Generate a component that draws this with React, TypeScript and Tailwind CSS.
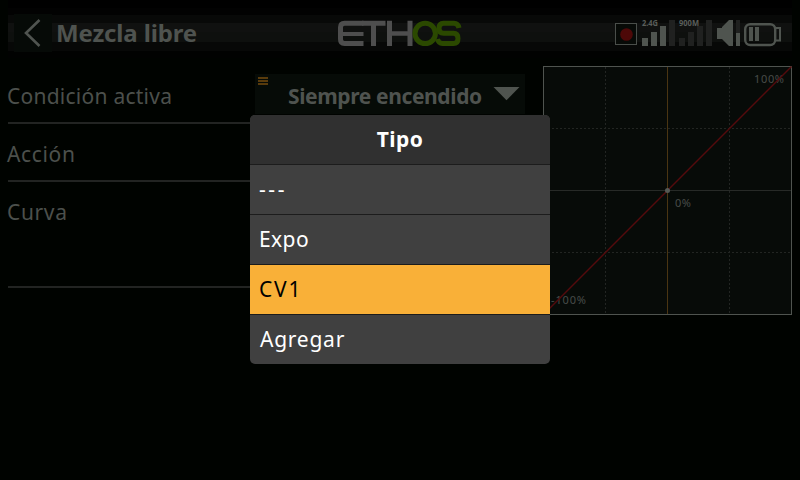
import React from "react";

function StatusIcons() {
  return (
    <svg className="h-[50px] w-[180px]" viewBox="612 8 180 50">
      <rect x="615.5" y="23.5" width="21" height="21" fill="#070a07" stroke="#4a4e4a" />
      <circle cx="626.5" cy="34.5" r="6.3" fill="#4d0808" />
      <g fill="#4f544f">
        <rect x="642" y="38" width="6" height="8" />
        <rect x="651" y="32" width="6" height="14" />
        <rect x="660" y="26" width="6" height="20" />
      </g>
      <g fill="#202120">
        <rect x="669" y="20" width="6" height="26" />
        <rect x="679" y="38" width="6" height="8" />
        <rect x="688" y="32" width="6" height="14" />
        <rect x="697" y="26" width="6" height="20" />
        <rect x="706" y="20" width="6" height="26" />
        <rect x="736" y="20" width="4" height="13" />
      </g>
      <g fill="#5a5e5a" fontFamily="'Noto Sans', sans-serif" fontSize="8" fontWeight="700">
        <text x="642" y="26" textLength="16" lengthAdjust="spacingAndGlyphs">2.4G</text>
        <text x="679" y="26" textLength="20" lengthAdjust="spacingAndGlyphs">900M</text>
      </g>
      <path d="M717 28h5v11h-5zM722 27l7-7h4v26h-4l-7-7z" fill="#4f544f" />
      <rect x="736" y="33" width="4" height="13" fill="#4f544f" />
      <rect x="745.2" y="24.2" width="30" height="20.800" rx="5" fill="none" stroke="#4f544f" strokeWidth="2.4" />
      <path d="M776 28h4v12.500h-4" fill="none" stroke="#4f544f" strokeWidth="2" />
      <path d="M749 27h4v14h-4zM755 27h4v14h-4z" fill="#4f544f" />
    </svg>
  );
}

function EthosLogo() {
  return (
    <svg className="h-[30px] w-[130px]" viewBox="335 18 130 30" role="img" aria-label="ETHOS" fill="none" strokeWidth="5">
      <g stroke="#4e4e4e">
        <path d="M363.500 23.300H344.500q-4 0-4 4v12q0 4.200 4 4.200h19" />
        <path d="M341 34h22.500" strokeWidth="4" />
        <path d="M362 23.300h23.500M373.500 23v23M389.500 20.800v25.200M410 20.800v25.200" />
        <path d="M390 33.500h19" strokeWidth="4.500" />
      </g>
      <g stroke="#2b4900">
        <circle cx="425.200" cy="33.400" r="10.200" />
        <path d="M459 28q-1-4.700-5-4.700h-10.500q-4.500 0-4.500 5t4.500 5h10q4.500 0 4.500 5.100t-4.500 5.100h-11q-4 0-5-4.500" />
      </g>
    </svg>
  );
}

function Header() {
  return (
    <header className="mx-2 flex h-[66px] items-center bg-[linear-gradient(to_bottom,#000_0_8px,#020202_8px_15px,#080908_15px_23px,#101110_23px_32px,#0e100e_32px_42px,#070807_42px_51px,#010201_51px_58px,#000300_58px)]">
      <div className="ml-1.5 flex h-[38px] w-[38px] items-center justify-center bg-[#060a07]">
        <svg className="h-[38px] w-[38px]" viewBox="0 0 38 38" fill="none" stroke="#505450" strokeWidth="2.6">
          <path d="M25.500 6L12 19l13.500 13" />
        </svg>
      </div>
      <h1 className="-mt-px ml-1 w-[279px] text-[24px] leading-[36px] font-bold tracking-[-0.15px] whitespace-nowrap text-[#4f534f]">
        Mezcla libre
      </h1>
      <EthosLogo />
      <div className="ml-auto">
        <StatusIcons />
      </div>
    </header>
  );
}

type RowProps = { label: string; tracking: string; tall?: boolean; children?: React.ReactNode };

function SettingRow({ label, tracking, tall, children }: RowProps) {
  return (
    <div className={`flex justify-between border-b-2 border-[#222422] ${tall ? "h-[106px]" : "h-[58px]"}`}>
      <span className={`-ml-px h-[60px] text-[21px] leading-[60px] whitespace-nowrap text-[#4c504c] ${tracking}`}>
        {label}
      </span>
      {children}
    </div>
  );
}

function SelectField() {
  return (
    <div className="mt-2 flex h-10 w-[270px] bg-[#060b07]">
      <div className="mt-[3px] ml-[3px] flex w-2.5 flex-col gap-px">
        <i className="h-0.5 bg-[#593b0c]" />
        <i className="h-0.5 bg-[#593b0c]" />
        <i className="h-0.5 bg-[#593b0c]" />
      </div>
      <span className="ml-5 w-[205px] text-[21px] leading-[44px] font-bold tracking-[-0.38px] whitespace-nowrap text-[#4f534f]">
        Siempre encendido
      </span>
      <svg className="mt-[13px] h-[14px] w-[27px]" viewBox="0 0 27 14">
        <path d="M0.500 0h26l-13 13.300z" fill="#4f544f" />
      </svg>
    </div>
  );
}

function CurveChart() {
  return (
    <svg className="h-[249px] w-[249px]" viewBox="0 0 249 249">
      <rect x="0.500" y="0.500" width="248" height="248" fill="#070b08" stroke="#4f544f" />
      <g stroke="#222522" strokeDasharray="2 2">
        <path d="M62.500 1v247M186.500 1v247M1 62.500h247M1 186.500h247" />
      </g>
      <path d="M1 124.500h247" stroke="#272a27" />
      <path d="M124.500 1v247" stroke="#4a3512" />
      <g fill="#484b48" fontFamily="'Noto Sans', sans-serif" fontSize="11">
        <text x="211" y="17" textLength="30">100%</text>
        <text x="132" y="141" textLength="16">0%</text>
        <text x="8" y="238" textLength="35">-100%</text>
      </g>
      <path d="M0.500 248.500L248.500 0.500" stroke="#540a0c" strokeWidth="1.4" />
      <circle cx="124.500" cy="124.500" r="2.500" fill="#555955" />
    </svg>
  );
}

const options = [
  { name: "---", spacing: "pl-[9px] tracking-[2.6px]" },
  { name: "Expo", spacing: "pl-[9px] tracking-[0.4px]" },
  { name: "CV1", spacing: "pl-[9px] tracking-[1.8px]" },
  { name: "Agregar", spacing: "pl-2.5 tracking-[0.75px]" },
];

function TypeMenu() {
  return (
    <div className="absolute top-[115px] left-[250px] h-[249px] w-[300px] overflow-hidden rounded-[5px] bg-[#404040] text-[21px] text-white">
      <div className="h-[50px] border-b border-[#1c1c1c] bg-[#303030] text-center leading-[48px] font-bold tracking-[0.4px]">
        Tipo
      </div>
      {options.map(({ name, spacing }) => (
        <div
          key={name}
          className={`h-[50px] border-b border-[#1c1c1c] leading-[48px] last:border-b-0 ${spacing} ${
            name === "CV1" ? "bg-[#f9b038] text-black" : ""
          }`}
        >
          {name}
        </div>
      ))}
    </div>
  );
}

export default function App() {
  return (
    <main className="relative h-[480px] w-[800px] overflow-hidden bg-[#000300] font-['Noto_Sans',sans-serif]">
      <Header />
      <div className="mx-2 flex justify-between">
        <section className="w-[517px]">
          <SettingRow label="Condición activa" tracking="tracking-[0.25px]">
            <SelectField />
          </SettingRow>
          <SettingRow label="Acción" tracking="tracking-[0.65px]" />
          <SettingRow label="Curva" tracking="tracking-[0.65px]" tall />
        </section>
        <CurveChart />
      </div>
      <TypeMenu />
    </main>
  );
}
